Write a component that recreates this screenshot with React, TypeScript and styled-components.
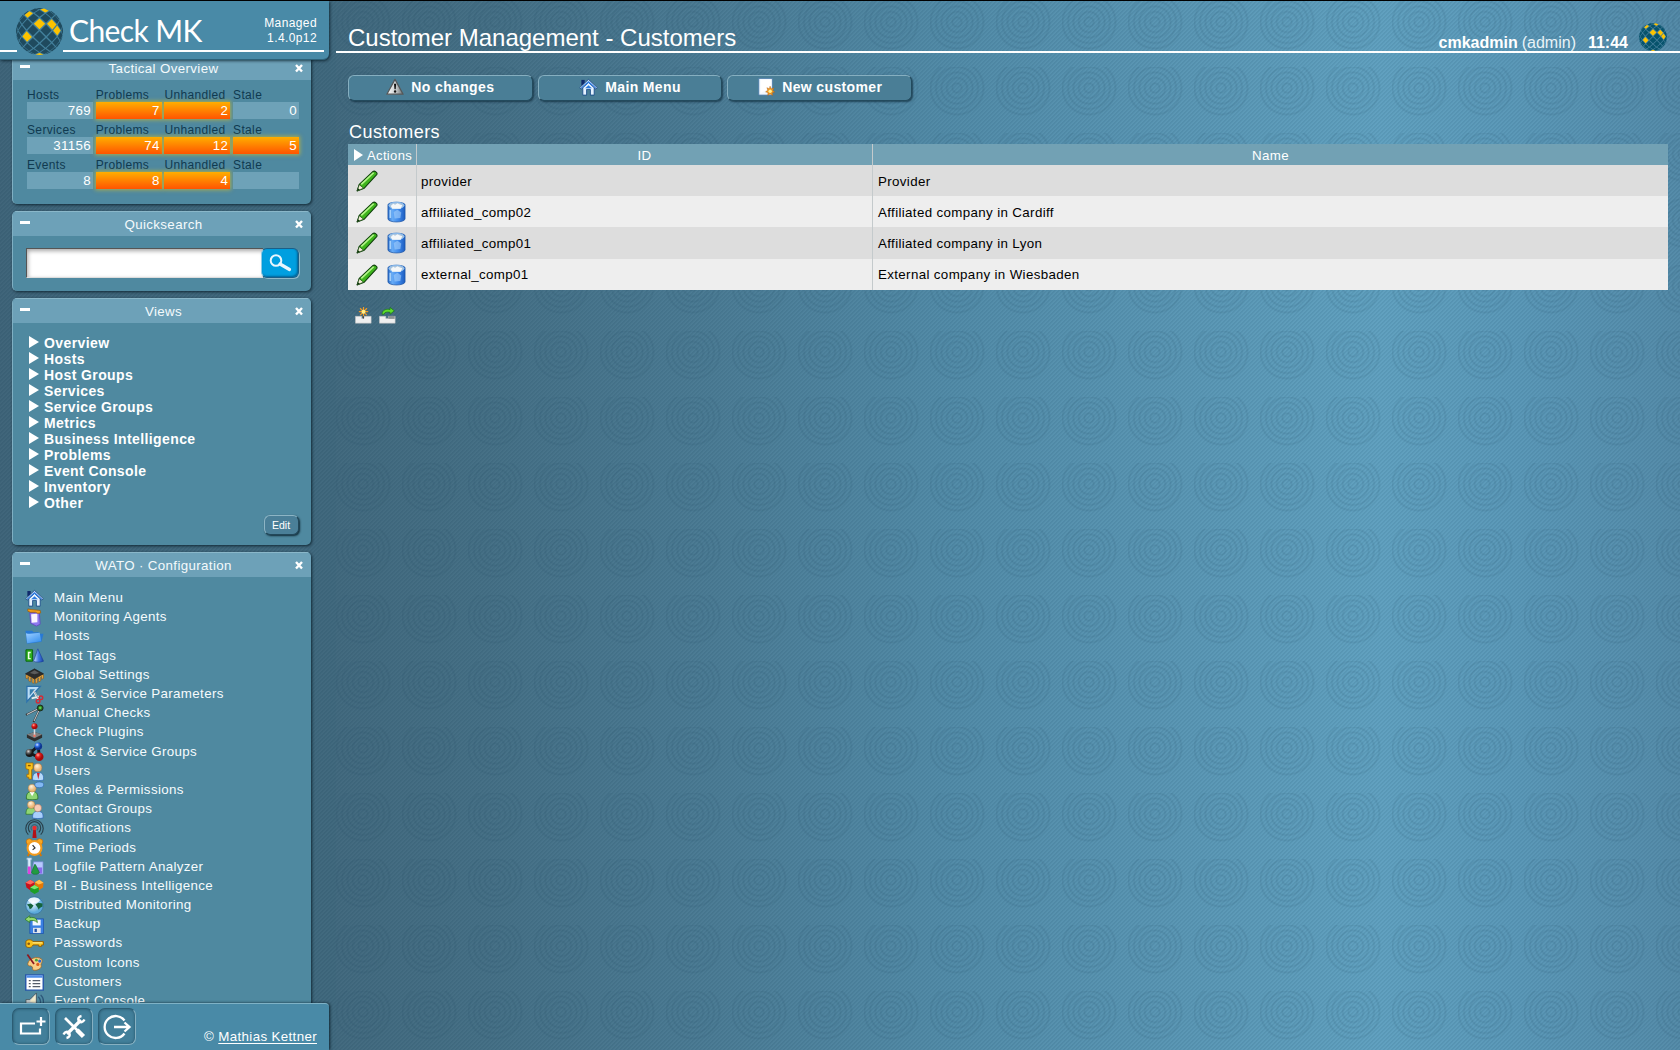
import React from "react";
import styled, { createGlobalStyle, css } from "styled-components";

const Global = createGlobalStyle`
  * { box-sizing: border-box; }
  html, body { margin: 0; padding: 0; }
  body {
    width: 1680px; height: 1050px; overflow: hidden; background: #42697d;
    font-family: "Liberation Sans", Arial, sans-serif; font-size: 13.33px; letter-spacing: 0.36px; color: #fff;
  }
`;

const stripes = css`
  repeating-linear-gradient(135deg, rgba(20, 50, 70, 0.07) 0px, rgba(20, 50, 70, 0.07) 1px, rgba(255, 255, 255, 0.015) 1.6px, rgba(255, 255, 255, 0.015) 2.5px, rgba(20, 50, 70, 0.07) 2.828px)
`;

const Page = styled.div`
  display: flex; width: 1680px; height: 1050px; border-top: 1px solid #000; overflow: hidden;
`;

const Sidebar = styled.div`
  width: 336px; flex: none; display: flex; flex-direction: column;
  background: ${stripes}, linear-gradient(90deg, #3e6479 0, #3f687d 100%);
`;

const SideHeader = styled.header`
  width: 329px; height: 59px; flex: none; display: flex; padding: 0 12px 0 16px; align-items: flex-start;
  background: linear-gradient(#fff, #fff) 0 49px / 17px 2px no-repeat,
    linear-gradient(#fff, #fff) 63px 49px / 261px 2px no-repeat, #498aa7;
  border-radius: 0 0 6px 0; border-bottom: 1px solid #2f6279;
  box-shadow: 1px 1px 3px rgba(0, 20, 30, 0.7); position: relative; z-index: 2;
`;

const BrandName = styled.div`
  font: 30px/36px Lato, "Open Sans", sans-serif; letter-spacing: -0.6px; margin: 11px 0 0 6px; flex: 1;
`;
const Version = styled.div`
  font-size: 12px; line-height: 15px; text-align: right; margin-top: 15px; letter-spacing: 0.4px;
`;

const SideScroll = styled.div`
  flex: 1; overflow: hidden; padding: 0 0 0 12px; display: flex; flex-direction: column; min-height: 0;
`;

const Snapin = styled.section<{ $h: number; $first?: boolean }>`
  width: 299px; height: ${(p) => p.$h}px; flex: none; margin-top: ${(p) => (p.$first ? -5 : 0)}px; margin-bottom: 7px;
  border-radius: 5px; background: #4f89a0; box-shadow: 1px 1px 3px rgba(0, 20, 30, 0.75);
  border-left: 1px solid #7fafc2; overflow: hidden;
`;
const SnapinHead = styled.div`
  height: 25px; display: flex; align-items: center; background: #6da1b8; border-top: 1px solid #8ab7c9;
  padding: 1px 8px 0 7px; line-height: 18px; color: #f4fafc;
`;
const Minus = styled.i`width: 10px; height: 3px; background: #fff; margin-top: -5px;`;
const HeadText = styled.div`flex: 1; text-align: center; padding-left: 2px;`;

const Tactical = styled.div`
  display: grid; grid-template-columns: 66px 66px 66px 66px; column-gap: 2.7px; padding: 5px 0 0 14px;
`;
const TacLabel = styled.div`
  height: 18px; padding-top: 4px; line-height: 14px; font-size: 12px; color: #103a50; letter-spacing: 0.35px; margin-top: -1px;
`;
const TacValue = styled.div<{ $hot: boolean }>`
  height: 17px; margin-bottom: 1px; line-height: 17px; text-align: right; padding-right: 2px;
  background: #6ea2b8;
  ${(p) => p.$hot && css`
    background: linear-gradient(#ffae00, #ff5400); box-shadow: 0 0 4px 1px rgba(215, 190, 40, 0.65);
  `}
`;

const SearchBox = styled.div`display: flex; padding: 12px 0 0 13px;`;
const SearchInput = styled.div`
  width: 237px; height: 30px; background: #fff; border: 1px solid #555; border-bottom-color: #ddd; border-right: 0;
  box-shadow: inset 1px 2px 4px rgba(0, 0, 0, 0.35);
`;
const SearchButton = styled.div`
  width: 38px; height: 30px; margin-left: -2px; border-radius: 6px; background: #009fe0; display: flex;
  align-items: center; justify-content: center; border: 1px solid #1b5f88; border-left-color: #8ccbe6;
  box-shadow: 1px 1px 0 #8fb9c9, inset -1px -1px 2px rgba(0, 40, 80, 0.5);
`;

const Tree = styled.div`padding: 12px 0 0 16px;`;
const TreeItem = styled.div`
  height: 16px; line-height: 16px; font-weight: bold; font-size: 14px; letter-spacing: 0.4px;
  display: flex; align-items: center; gap: 5px; color: #fff;
  i { margin-top: -2px; }
`;
const Arrow = styled.i<{ $small?: boolean }>`
  width: 0; height: 0; border-left: ${(p) => (p.$small ? 9 : 10)}px solid #fff;
  border-top: 6px solid transparent; border-bottom: 6px solid transparent;
`;
const Edit = styled.div`
  width: 35px; height: 20px; margin: 4px 12px 0 auto; border-radius: 6px; border: 1px solid #8db5c5;
  border-right-color: #22485a; border-bottom-color: #22485a; background: #4a7f98; font-size: 10.5px; letter-spacing: 0;
  text-align: center; line-height: 19px; padding-right: 1px; box-shadow: 1px 1px 2px rgba(0, 20, 30, 0.8);
`;

const WatoList = styled.div`padding: 11px 0 0 12px;`;
const WatoItem = styled.div`
  height: 19.2px; display: flex; align-items: center; gap: 10px; line-height: 19px; white-space: nowrap; color: #f6fbfd;
  svg { margin-top: 1.5px; }
`;

const SideFooter = styled.footer`
  width: 329px; height: 47px; flex: none; background: #498aa7; border-top: 1px solid #7fb2c6; border-radius: 0 4px 0 0;
  display: flex; gap: 5px; padding: 4px 12px 0 12px; position: relative; z-index: 2;
  box-shadow: 1px 0 3px rgba(0, 20, 30, 0.8);
`;
const FootButton = styled.div`
  width: 38px; height: 37px; border-radius: 7px; background: #427f9a; border: 1px solid #2b5c73;
  border-right-color: #86b0c1; border-bottom-color: #86b0c1; box-shadow: inset 0 0 3px #234f64;
  display: flex; align-items: center; justify-content: center;
`;
const Copyright = styled.div`margin: 21px 0 0 auto; line-height: 15px; white-space: nowrap; u { text-underline-offset: 2px; }`;

const Main = styled.main`
  flex: 1; min-width: 0; display: flex; flex-direction: column;
  background: ${stripes},
    radial-gradient(circle at 27px 21px, rgba(25, 65, 90, 0) 0, rgba(25, 65, 90, 0) 3px, rgba(25, 65, 90, 0.11) 4.6px, rgba(25, 65, 90, 0) 6.3px,
      rgba(25, 65, 90, 0) 8.4px, rgba(25, 65, 90, 0.11) 10.2px, rgba(25, 65, 90, 0) 12px,
      rgba(25, 65, 90, 0) 13.8px, rgba(25, 65, 90, 0.11) 15.6px, rgba(25, 65, 90, 0) 17.4px,
      rgba(25, 65, 90, 0) 19.2px, rgba(25, 65, 90, 0.11) 21px, rgba(25, 65, 90, 0) 22.8px,
      rgba(25, 65, 90, 0) 24.6px, rgba(25, 65, 90, 0.11) 26.4px, rgba(25, 65, 90, 0) 28.2px) 0 0 / 66px 66px,
    linear-gradient(90deg, #41697e 0, #446f85 150px, #4a7b94 380px, #518ba8 620px, #5996b4 850px, #5fa0bf 1045px, #5997b7 1180px, #538aa8 1344px);
`;
const TopBar = styled.div`
  height: 52px; flex: none; border-bottom: 2px solid #fff; display: flex; align-items: flex-end; padding: 0 13px 0 12px;
`;
const Title = styled.h1`margin: 0 0 -1px; flex: 1; font-size: 24px; font-weight: normal; line-height: 28px; letter-spacing: 0;`;
const UserInfo = styled.div`
  font-size: 16px; line-height: 18px; letter-spacing: 0; display: flex; align-items: flex-end; margin-bottom: -1px;
  span { margin-left: 4px; color: #e9f3f7; } time { font-weight: bold; margin: 0 11px 0 12px; } svg { margin-bottom: 1px; }
`;
const ButtonRow = styled.div`display: flex; gap: 5px; padding: 22px 0 0 12px;`;
const ContextButton = styled.div`
  width: 184.7px; height: 26px; border-radius: 6px; border: 1px solid #86afc0; border-right-color: #234a5d;
  border-bottom-color: #234a5d; background: #4a7e96; box-shadow: 1px 1px 2px rgba(0, 25, 40, 0.6);
  display: flex; align-items: center; justify-content: center; gap: 7px; font-weight: bold; font-size: 14px; letter-spacing: 0.36px;
  line-height: 22px; padding-bottom: 2px;
`;
const TableTitle = styled.h3`
  margin: 18px 0 0 13px; font-size: 18px; font-weight: normal; line-height: 26px; height: 25px; letter-spacing: 0.45px; color: #fff;
`;
const Table = styled.div`margin: 0 12px; color: #000;`;
const TRow = styled.div<{ $kind: "head" | "odd" | "even" }>`
  display: grid; grid-template-columns: 69px 456px 1fr; height: ${(p) => (p.$kind === "head" ? 21 : 31.2)}px;
  background: ${(p) => ({ head: "#72a1b4", odd: "#ddd", even: "#eee" })[p.$kind]};
  color: ${(p) => (p.$kind === "head" ? "#fff" : "#000")};
`;
const Cell = styled.div<{ $center?: boolean; $last?: boolean }>`
  display: flex; align-items: center; justify-content: ${(p) => (p.$center ? "center" : "flex-start")};
  padding-left: ${(p) => (p.$center ? 0 : p.$last ? 5 : 4)}px; padding-top: 1px; border-right: ${(p) => (p.$last ? 0 : 1)}px solid #c4cacc;
`;
const ActionCell = styled(Cell)`padding-left: 8px; gap: 9px;`;
const HeadActionCell = styled(Cell)`padding-left: 6px; gap: 4px; font-size: 13px;`;
const FootIcons = styled.div`display: flex; gap: 7px; padding: 17px 0 0 19px;`;

const icons: Record<string, React.ReactNode> = {
  home: <>
    <path d="M2.500 2h3.500v6H2.500z" fill="#102a6c" />
    <path d="M4 10v8h4v-6h4v6h4v-8l-6-5.500z" fill="#e6f2ff" stroke="#164a87" strokeWidth=".9" />
    <path d="M10 7.500l3.500 3.300h-7z" fill="#2d7be0" />
    <path d="M.8 10.200L10 1.500l9.200 8.700-1.400 1.500L10 4.600l-7.800 7.100z" fill="#f3f9ff" stroke="#113e86" strokeWidth=".8" />
    <path d="M2.200 10.600L10 3.300l7.800 7.300L10 4.900z" fill="#2d7be0" stroke="#2d7be0" strokeWidth=".8" />
  </>,
  agent: <>
    <path d="M5 5l10-1 1 13-4 2-6-3z" fill="#8e78ee" stroke="#6148bd" strokeWidth=".8" />
    <path d="M6.500 6.500l6.500-.5v9l-6 .5z" fill="#fbf5ff" />
    <path d="M3 1l4 .7L16 2.500l.5 2.700-3 .5L11 4.500 6 4.500 3 3.500z" fill="#f2a01c" stroke="#9b5706" strokeWidth=".7" />
  </>,
  folder: <>
    <path d="M.5 4h7L9 5.500h6V7h4.500l-2.200 8.500L2 17.500z" fill="#2779d4" />
    <path d="M1 6.500C6 8 11 6 15.500 6L17 15 2.300 17z" fill="url(#blueFill)" />
  </>,
  tags: <>
    <path d="M1 4h7v12H1z" fill="#2cae1d" stroke="#0c6410" /><path d="M3 6h3v1.500H4.600v5H6V14H3z" fill="#efffe9" />
    <path d="M13.500 3L19.500 16c-3 1.300-8 1.300-10.500 0z" fill="url(#coneFill)" stroke="#173a95" strokeWidth=".6" />
  </>,
  chip: <>
    <path d="M1 9v4l2 .5V11l1 .7v4l2 1v-4l1.500.8v4l2 .8v-4h1.500v4l2-.8v-4l1.500-.8v4l2-1v-4l1-.7v3l2-1V9z" fill="#e7a63f" stroke="#7d4b12" strokeWidth=".5" />
    <path d="M10 3l9.500 5.200L10 13.800.5 8.200z" fill="#2c2c2c" stroke="#1b1b1b" strokeWidth=".6" /><path d="M10 4.500l5 2.800-5 1.500-5-1.500z" fill="#5c5c5c" />
  </>,
  params: <>
    <path d="M2 1.500h14L2 17.500z" fill="#b9dcf5" stroke="#2c71ab" strokeWidth="1.400" /><path d="M5 4.500h5.500L5 11z" fill="#397fae" />
    <path d="M9 6l5 9M7 14l8-2" stroke="#e8edf0" strokeWidth="2" /><path d="M9 6l5 8" stroke="#5d6970" strokeWidth=".6" />
    <g fill="none" stroke="#d52b36" strokeWidth="1.500"><circle cx="16.800" cy="13.500" r="1.900" /><circle cx="13.800" cy="17" r="1.900" /></g>
  </>,
  compass: <>
    <path d="M16 4L1 11.500M16 4L9 19" stroke="#333" strokeWidth="2" /><path d="M16 4L2 11M16 4L9.500 18" stroke="#c0c6c8" strokeWidth="1.100" />
    <circle cx="16" cy="4.200" r="3.100" fill="#276d21" stroke="#161616" strokeWidth=".8" /><circle cx="16" cy="4" r="1.400" fill="#5ad048" />
  </>,
  joystick: <>
    <path d="M2 12l8-2.500 8 2.500v3.500L10 19.500 2 15.500z" fill="#2f2f2f" /><path d="M2 12l8-2.500 8 2.500-8 4z" fill="#7e8081" />
    <path d="M10 5v8" stroke="#d7dadb" strokeWidth="1.600" /><circle cx="10" cy="3.500" r="3.200" fill="url(#redFill)" /><circle cx="10" cy="13.500" r="1.300" fill="#f07460" />
  </>,
  groups: <>
    <path d="M5 12l9-8 1 12z" fill="none" stroke="#15191e" strokeWidth="3" />
    <circle cx="14" cy="4.500" r="4" fill="url(#ballBlue)" /><circle cx="4.800" cy="11.500" r="4.200" fill="url(#ballGray)" /><circle cx="15" cy="15.500" r="4.500" fill="url(#redFill)" />
  </>,
  users: <>
    <path d="M8 19c-.5-6 2-8 6-8s6 2 5.500 8c-3 .8-8 .8-11.500 0z" fill="#b5dafa" stroke="#3470b7" strokeWidth=".8" /><path d="M12.500 11.500l1.500 7 1.500-7z" fill="#cf2433" />
    <circle cx="13.500" cy="6" r="4.300" fill="url(#skin)" stroke="#a46b3b" strokeWidth=".5" />
    <path d="M1 1h7.500v6L7 8v10H4v-2H2v-3h2V8L1 7z" fill="#f8c21a" stroke="#a26700" strokeWidth=".8" /><path d="M3 3h3v1.500H3z" fill="#8b5500" />
  </>,
  roles: <>
    <path d="M1.500 19c-.5-7 3-8 6-8s6.500 1 6 8c-4 1-8 1-12 0z" fill="#8fd574" stroke="#28711e" strokeWidth=".8" /><path d="M5 11.500l2.500 4.500L10 11.500z" fill="#fff" />
    <circle cx="7.500" cy="7.500" r="4.200" fill="url(#skin)" stroke="#a27943" strokeWidth=".5" /><ellipse cx="15" cy="4" rx="4.700" ry="3" fill="#83b9f3" stroke="#2e66ad" strokeWidth=".7" />
  </>,
  contacts: <>
    <path d="M1 15c0-6 2-7 5.500-7S12 10 12 15z" fill="#8fd574" stroke="#28711e" strokeWidth=".7" /><circle cx="6.500" cy="5" r="4" fill="url(#skin)" stroke="#a27943" strokeWidth=".5" />
    <path d="M8 19c-.3-6 2-7 5.500-7s6 1 5.500 7c-4 .7-7 .7-11 0z" fill="#a8cffb" stroke="#3269b7" strokeWidth=".8" /><circle cx="13.500" cy="8.500" r="3.900" fill="#f6cbb4" stroke="#ae6a50" strokeWidth=".5" />
  </>,
  notify: <>
    <g fill="none" stroke="#29404b" strokeWidth="1.200"><path d="M3.500 16.500a9.200 9.200 0 1 1 13 0" /><path d="M5.500 14a6.500 6.500 0 1 1 9 0" /><path d="M7.500 12a3.500 3.500 0 1 1 5 0" opacity=".5" /></g>
    <path d="M8.800 10h2.400l1 10H7.800z" fill="#b31218" /><circle cx="10" cy="9.500" r="2.300" fill="#ed2b2b" />
  </>,
  clock: <>
    <path d="M5 15l-2 4M15 15l2 4" stroke="#d17609" strokeWidth="2" /><circle cx="4.500" cy="4" r="3.200" fill="#f7a823" stroke="#bc6408" strokeWidth=".7" /><circle cx="15.500" cy="4" r="3.200" fill="#f7a823" stroke="#bc6408" strokeWidth=".7" />
    <circle cx="10" cy="10.500" r="7.300" fill="#fff" stroke="#f39b1b" strokeWidth="2.200" /><path d="M8 7.500l2.500 3L8 12.500" fill="none" stroke="#333" strokeWidth="1.300" />
  </>,
  lab: <>
    <path d="M2 1h5v2H6v14H3V3H2z" fill="#d9ecfa" stroke="#8bb1d1" strokeWidth=".7" /><path d="M3 10h3v8H3z" fill="#dd43dd" />
    <path d="M9 5h10v13H7z" fill="#b7c9ff" stroke="#6e87cf" strokeWidth=".7" /><path d="M8 11h10v6.500H8z" fill="#8a6ced" />
    <path d="M10 8h1l4 8c.5 3-9 3-8 0z" fill="#219b40" stroke="#0d652d" strokeWidth=".6" />
  </>,
  bi: <>
    <path d="M.5 6l5-3L10 5.500V11l-4.500 3L1.500 11z" fill="#c7121c" /><path d="M.5 6l5-3L10 5.500 5.500 8z" fill="#ff6961" />
    <path d="M10.500 5.500L15 3l4.500 3-.5 5-4.500 3-4-3z" fill="#e47806" /><path d="M10.500 5.500L15 3l4.500 3-5 2z" fill="#ffc04d" />
    <path d="M5.500 11L10 8.500l4.500 2.500v4.500L10 18l-4.500-3z" fill="#1d9f26" /><path d="M5.500 11L10 8.500l4.500 2.500L10 13z" fill="#7cea6b" />
  </>,
  globe: <>
    <circle cx="10" cy="10" r="9.200" fill="url(#globeFill)" stroke="#326b9b" strokeWidth=".7" /><path d="M2 9l4-1 3 2-2 3-2 1-1-3zM11 9l3-2 4.500 1v3l-3 1.500-1 2-1.500-3z" fill="#16643c" /><ellipse cx="9.500" cy="4.500" rx="6" ry="3" fill="#fff" opacity=".8" />
  </>,
  backup: <>
    <path d="M5 4h14.500v15.500H5z" fill="#3a80e2" stroke="#1b4da6" strokeWidth=".7" /><path d="M8 5h8.500v6H8z" fill="#f2f8ff" /><path d="M8.500 13.500h8v5.500h-8z" fill="#e6e9ee" /><path d="M10 14.500h2.500V18H10z" fill="#2454a9" />
    <path d="M0 4.500L5 .8v2c5-1 8 1 8 5.200-2-2.500-5-2.500-8-2v2z" fill="#94da70" stroke="#2a7a24" strokeWidth=".8" />
  </>,
  key: <>
    <path d="M1 7.500C3 5.500 7 5.500 8.500 8H19.500v3.500h-2V13h-3v-1.500H8.500C7 15 3 14.800 1 13z" fill="#fac31b" stroke="#8f5900" strokeWidth=".9" /><path d="M8 9.300h10" stroke="#fff0a0" /><circle cx="3.900" cy="10.300" r="1.400" fill="#8a5b10" />
  </>,
  palette: <>
    <path d="M3 11c1-5 9-8 14-5 3 3-1 5 0 7 1 3-4 6-8 5-2-.5 0-3-2-4s-4 .5-4-3z" fill="#f8ce86" stroke="#a2641b" strokeWidth=".8" />
    <circle cx="12" cy="7.500" r="1.500" fill="#42a83c" /><circle cx="15.500" cy="8.500" r="1.700" fill="#2e68d5" /><circle cx="13.500" cy="12" r="1.700" fill="#dc5e1b" /><path d="M2.500 1.500l7 10" stroke="#8d1920" strokeWidth="1.800" />
  </>,
  list: <>
    <path d="M.8 2h18.400v16H.8z" fill="#fff" stroke="#2556a8" strokeWidth="1.500" /><path d="M1.500 2.500h17V5h-17z" fill="#4d8ce8" />
    <path d="M4 8h2M4 11.200h2M4 14.400h2M8 8h8M8 11.200h8M8 14.400h8" stroke="#555d69" strokeWidth="1.300" />
  </>,
  speaker: <>
    <path d="M1 8h4l7-7v18l-7-6H1z" fill="#c9cfd1" stroke="#3d4b50" strokeWidth=".8" /><path d="M5 10l6-7v9z" fill="#f3ebc8" /><path d="M14 5c3 3 3 7 0 10M16.500 3c4 4 4 10 0 14" fill="none" stroke="#2d5678" strokeWidth="1.400" />
  </>,
  warning: <>
    <path d="M10 1.500L19 18H1z" fill="url(#metal)" stroke="#54585a" strokeWidth="1.400" strokeLinejoin="round" /><path d="M8.900 6.500h2.400l-.5 6H9.400z" fill="#111" /><circle cx="10.100" cy="15" r="1.300" fill="#111" />
  </>,
  newdoc: <>
    <path d="M2 .5h15v18.500H2z" fill="#f3f9ff" stroke="#4978aa" strokeWidth=".9" /><path d="M4 2h12v8L4 17z" fill="#fff" />
    <path d="M14.500 9l1.300 3 3-1-1.300 2.900 2.300 1.700-2.800.8.500 3-3-1.600-2.600 1.600.3-3-2.700-1 2.500-1.800-1-2.900 2.700 1.300z" fill="#ef9520" stroke="#a85b0a" strokeWidth=".4" /><circle cx="14.600" cy="14.800" r="1.900" fill="#fff295" />
  </>,
  pencil: <>
    <path d="M1 19l2-6L15.500 1.300c1.500-.8 4.200 1 3.500 2.600L7.500 16.500z" fill="#3fb51d" stroke="#11420d" strokeWidth="1" strokeLinejoin="round" /><path d="M4.800 13L16 2.500" stroke="#b5f58a" strokeWidth="1.500" /><path d="M1 19l2-5.700 3.800 3.200z" fill="#f5efd8" stroke="#11420d" strokeWidth=".6" /><path d="M1 19l.8-2.500 1.700 1.400z" fill="#0b3209" />
  </>,
  trash: <>
    <path d="M1 3.500C1 .3 19 .3 19 3.500v12.700c0 3.800-18 3.800-18 0z" fill="url(#trashFill)" stroke="#1a54a6" strokeWidth=".7" />
    <ellipse cx="10" cy="4" rx="8" ry="2.900" fill="#a9c4dd" stroke="#8cbff3" strokeWidth=".8" /><path d="M4 4.500l2.500-2 2 .8L11 2l2 1 3 .8L14.500 7H5.500z" fill="#f5f7f8" />
    <path d="M3.500 8v7.500" stroke="#b4dcff" strokeWidth="1.800" opacity=".85" /><path d="M7 10l4-2 4 2.500-1 5-6 .5z" fill="#a4cffc" opacity=".6" />
  </>,
  addrow: <>
    <path d="M.5 11h7.500v2.500h2.500v-2.500h8.500v8H.5z" fill="#efefef" stroke="#bdbdbd" strokeWidth=".6" /><path d="M10 7v6.500" stroke="#444" strokeWidth="1.300" />
    <path d="M10 0v11M4.500 5.500h11M6 1.500l8 8M14 1.500l-8 8" stroke="#f29a22" strokeWidth="1.400" /><circle cx="10" cy="5.500" r="2.300" fill="#fff087" />
  </>,
  moverow: <>
    <path d="M.5 11h7.500v2.500h3v-2.500h8v8H.5z" fill="#efefef" stroke="#bdbdbd" strokeWidth=".6" /><path d="M11 10.500h7.500V14H11z" fill="#8c9294" />
    <path d="M3.500 8.500C4 3 9 2 13 3V.5L18 4.500 13 8.500V6.200C9 5.500 6.500 6 6 8.500z" fill="#5fdc2d" stroke="#187517" strokeWidth=".8" />
  </>,
};

const Icon = ({ name, w = 20, h }: { name: string; w?: number; h?: number }) => (
  <svg width={w} height={h ?? w} viewBox="0 0 20 20" preserveAspectRatio="none">{icons[name]}</svg>
);

const Defs = () => (
  <svg width="0" height="0" display="block">
    <defs>
      <linearGradient id="blueFill" x2=".7" y2="1"><stop stopColor="#9ed0ff" /><stop offset="1" stopColor="#3c94f0" /></linearGradient>
      <linearGradient id="coneFill"><stop stopColor="#c9dfff" /><stop offset=".5" stopColor="#447ce4" /><stop offset="1" stopColor="#1741a5" /></linearGradient>
      <linearGradient id="metal"><stop stopColor="#fff" /><stop offset=".55" stopColor="#c9cccd" /><stop offset="1" stopColor="#6b7072" /></linearGradient>
      <linearGradient id="trashFill"><stop stopColor="#2769c6" /><stop offset=".25" stopColor="#66abf6" /><stop offset=".6" stopColor="#3f8aeb" /><stop offset="1" stopColor="#1d5dc0" /></linearGradient>
      <radialGradient id="redFill" cx=".35" cy=".3"><stop stopColor="#ffb0a0" /><stop offset=".5" stopColor="#e52020" /><stop offset="1" stopColor="#a30c0c" /></radialGradient>
      <radialGradient id="ballBlue" cx=".35" cy=".3"><stop stopColor="#cfe2ff" /><stop offset=".5" stopColor="#2f6ee6" /><stop offset="1" stopColor="#0c3590" /></radialGradient>
      <radialGradient id="ballGray" cx=".35" cy=".3"><stop stopColor="#d5d5d5" /><stop offset=".5" stopColor="#5c5c5c" /><stop offset="1" stopColor="#161616" /></radialGradient>
      <radialGradient id="skin" cx=".4" cy=".3"><stop stopColor="#fff3dc" /><stop offset="1" stopColor="#ecb777" /></radialGradient>
      <radialGradient id="globeFill" cx=".4" cy=".4"><stop stopColor="#eefaff" /><stop offset="1" stopColor="#5caada" /></radialGradient>
    </defs>
  </svg>
);

// Diamond tiles laid on a sphere: grid angles are projected orthographically onto a disc of radius 23.
const STEP = 0.29;
const TILT = -0.34;
const GOLD = new Set(["0,0", "2,0", "-2,2", "-2,-2", "1,-3", "3,1", "0,6"]);
const project = (a: number, b: number) => {
  const r = Math.hypot(a, b) || 0.0001;
  const k = (23 * Math.sin(Math.min(r, Math.PI / 2))) / r;
  return `${(23 + a * k).toFixed(2)},${(23 + b * k).toFixed(2)}`;
};
const tiles: { key: string; points: string; gold: boolean }[] = [];
for (let i = -6; i <= 6; i++) {
  for (let j = -5; j <= 7; j++) {
    if ((i + j) % 2 !== 0) continue;
    const x = i * STEP;
    const y = j * STEP + TILT;
    if (Math.hypot(x, y) > 1.58) continue;
    const s = STEP * 0.85;
    tiles.push({
      key: `${i},${j}`,
      gold: GOLD.has(`${i},${j}`),
      points: [project(x, y - s), project(x + s, y), project(x, y + s), project(x - s, y)].join(" "),
    });
  }
}
const Ball = ({ size, dark }: { size: number; dark: string }) => (
  <svg width={size} height={size} viewBox="0 0 46 46">
    <circle cx="23" cy="23" r="22.700" fill={dark} opacity=".15" />
    {tiles.map((t) => <polygon key={t.key} points={t.points} fill={t.gold ? "#fdc300" : dark} />)}
  </svg>
);

const BallBox = styled.div`margin: 7px 0 0 0; width: 47px; height: 47px;`;

const Close = () => (
  <svg width="8" height="9" viewBox="0 0 8 9"><path d="M1 1l6 6.500M7 1l-6 6.500" stroke="#fff" strokeWidth="2.400" /></svg>
);

const Head = ({ children }: { children: React.ReactNode }) => (
  <SnapinHead><Minus /><HeadText>{children}</HeadText><Close /></SnapinHead>
);

const tactical: [string, [string, boolean][]][] = [
  ["Hosts", [["769", false], ["7", true], ["2", true], ["0", false]]],
  ["Services", [["31156", false], ["74", true], ["12", true], ["5", true]]],
  ["Events", [["8", false], ["8", true], ["4", true], ["", false]]],
];
const views = ["Overview", "Hosts", "Host Groups", "Services", "Service Groups", "Metrics", "Business Intelligence", "Problems", "Event Console", "Inventory", "Other"];
const wato: [string, string][] = [
  ["home", "Main Menu"], ["agent", "Monitoring Agents"], ["folder", "Hosts"], ["tags", "Host Tags"], ["chip", "Global Settings"],
  ["params", "Host & Service Parameters"], ["compass", "Manual Checks"], ["joystick", "Check Plugins"], ["groups", "Host & Service Groups"],
  ["users", "Users"], ["roles", "Roles & Permissions"], ["contacts", "Contact Groups"], ["notify", "Notifications"], ["clock", "Time Periods"],
  ["lab", "Logfile Pattern Analyzer"], ["bi", "BI - Business Intelligence"], ["globe", "Distributed Monitoring"], ["backup", "Backup"],
  ["key", "Passwords"], ["palette", "Custom Icons"], ["list", "Customers"], ["speaker", "Event Console"],
];
const customers = [
  ["provider", "Provider"], ["affiliated_comp02", "Affiliated company in Cardiff"],
  ["affiliated_comp01", "Affiliated company in Lyon"], ["external_comp01", "External company in Wiesbaden"],
];

export default function App() {
  return (
    <>
      <Global />
      <Defs />
      <Page>
        <Sidebar>
          <SideHeader>
            <BallBox><Ball size={47} dark="#1f4a5e" /></BallBox>
            <BrandName>Check MK</BrandName>
            <Version>Managed<br />1.4.0p12</Version>
          </SideHeader>
          <SideScroll>
            <Snapin $h={149} $first>
              <Head>Tactical Overview</Head>
              <Tactical>
                {tactical.map(([label, values]) => (
                  <React.Fragment key={label}>
                    {[label, "Problems", "Unhandled", "Stale"].map((t) => <TacLabel key={t}>{t}</TacLabel>)}
                    {values.map(([v, hot], i) => <TacValue key={i} $hot={hot}>{v}</TacValue>)}
                  </React.Fragment>
                ))}
              </Tactical>
            </Snapin>
            <Snapin $h={80}>
              <Head>Quicksearch</Head>
              <SearchBox>
                <SearchInput />
                <SearchButton>
                  <svg width="24" height="20" viewBox="0 0 24 20" fill="none" stroke="#e9f6fd">
                    <circle cx="8" cy="7.500" r="5.300" strokeWidth="2" /><path d="M12 11l9.500 5.500" strokeWidth="3.200" strokeLinecap="round" />
                  </svg>
                </SearchButton>
              </SearchBox>
            </Snapin>
            <Snapin $h={247}>
              <Head>Views</Head>
              <Tree>{views.map((v) => <TreeItem key={v}><Arrow />{v}</TreeItem>)}</Tree>
              <Edit>Edit</Edit>
            </Snapin>
            <Snapin $h={470}>
              <Head>WATO · Configuration</Head>
              <WatoList>
                {wato.map(([icon, label]) => <WatoItem key={label}><Icon name={icon} w={19} />{label}</WatoItem>)}
              </WatoList>
            </Snapin>
          </SideScroll>
          <SideFooter>
            <FootButton>
              <svg width="30" height="26" viewBox="0 0 30 26" fill="none" stroke="#fff" strokeWidth="2.200"><path d="M19 9.500H5v10h19v-5" /><path d="M25 3v9M20.500 7.500h9" /></svg>
            </FootButton>
            <FootButton>
              <svg width="28" height="28" viewBox="0 0 28 28" fill="none" stroke="#fff">
                <path d="M5 5l18 18" strokeWidth="2.600" /><path d="M17 17l6.500 6.500" strokeWidth="4.500" /><path d="M21 7L7 21" strokeWidth="3.200" />
                <path d="M21.500 3c-3 .5-4 3-2.500 5s4 1.500 5.500-1.500M6.500 25c3-.5 4-3 2.500-5s-4-1.500-5.500 1.500" strokeWidth="2.400" />
              </svg>
            </FootButton>
            <FootButton>
              <svg width="32" height="28" viewBox="0 0 32 28" fill="none" stroke="#fff" strokeWidth="2.300"><path d="M23.500 7.500A11 11 0 1 0 23.500 20.500" /><path d="M13 14h15M23.500 9.500l5 4.500-5 4.500" /></svg>
            </FootButton>
            <Copyright>© <u>Mathias Kettner</u></Copyright>
          </SideFooter>
        </Sidebar>
        <Main>
          <TopBar>
            <Title>Customer Management - Customers</Title>
            <UserInfo><b>cmkadmin</b><span>(admin)</span><time>11:44</time><Ball size={28} dark="#07536c" /></UserInfo>
          </TopBar>
          <ButtonRow>
            <ContextButton><Icon name="warning" w={18} />No changes</ContextButton>
            <ContextButton><Icon name="home" w={19} />Main Menu</ContextButton>
            <ContextButton><Icon name="newdoc" w={18} />New customer</ContextButton>
          </ButtonRow>
          <TableTitle>Customers</TableTitle>
          <Table>
            <TRow $kind="head">
              <HeadActionCell><Arrow $small />Actions</HeadActionCell>
              <Cell $center>ID</Cell>
              <Cell $center $last>Name</Cell>
            </TRow>
            {customers.map(([id, name], i) => (
              <TRow key={id} $kind={i % 2 ? "even" : "odd"}>
                <ActionCell>
                  <Icon name="pencil" w={22} />
                  {i > 0 && <Icon name="trash" w={19} h={22} />}
                </ActionCell>
                <Cell>{id}</Cell>
                <Cell $last>{name}</Cell>
              </TRow>
            ))}
          </Table>
          <FootIcons><Icon name="addrow" w={17} /><Icon name="moverow" w={17} /></FootIcons>
        </Main>
      </Page>
    </>
  );
}
